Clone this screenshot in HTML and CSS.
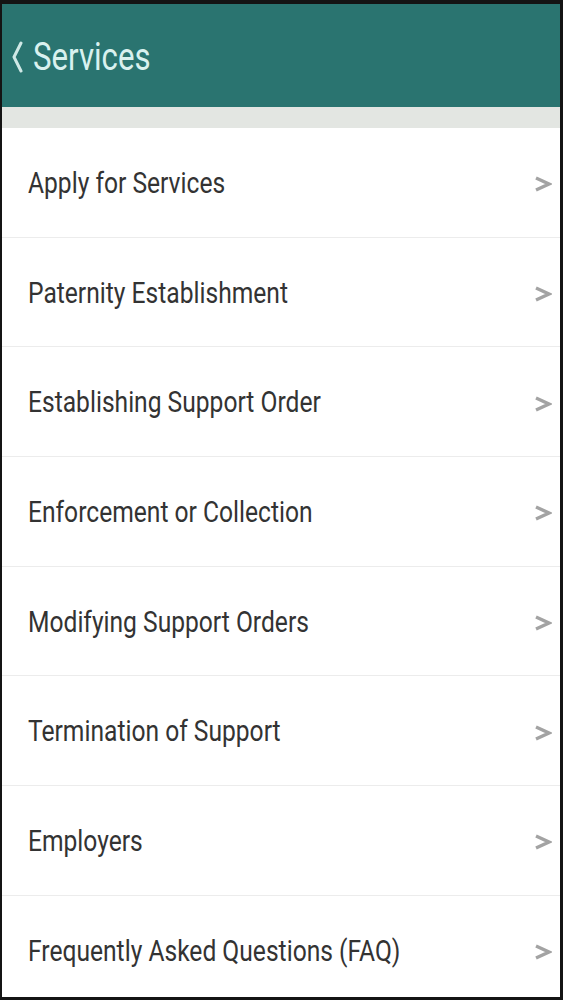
FILE: index.html
```html
<!DOCTYPE html>
<html>
<head>
<meta charset="utf-8">
<link rel="stylesheet" href="styles.css">
</head>
<body>
<div class="app">
  <header class="topbar">
    <svg class="back" width="14" height="32" viewBox="0 0 14 32"><polyline points="11,2 4,16 11,30" fill="none" stroke="#cfe8e6" stroke-width="3" stroke-linecap="round" stroke-linejoin="round"/></svg>
    <span class="title">Services</span>
  </header>
  <div class="band"></div>
  <ul class="list">
    <li class="row"><span class="label">Apply for Services</span><svg class="chev" width="18" height="18" viewBox="0 0 18 18"><polyline points="2,3 15,9 2,15" fill="none" stroke="#a3a3a3" stroke-width="3.4" stroke-linejoin="miter"/></svg></li>
    <li class="row"><span class="label">Paternity Establishment</span><svg class="chev" width="18" height="18" viewBox="0 0 18 18"><polyline points="2,3 15,9 2,15" fill="none" stroke="#a3a3a3" stroke-width="3.4" stroke-linejoin="miter"/></svg></li>
    <li class="row"><span class="label">Establishing Support Order</span><svg class="chev" width="18" height="18" viewBox="0 0 18 18"><polyline points="2,3 15,9 2,15" fill="none" stroke="#a3a3a3" stroke-width="3.4" stroke-linejoin="miter"/></svg></li>
    <li class="row"><span class="label">Enforcement or Collection</span><svg class="chev" width="18" height="18" viewBox="0 0 18 18"><polyline points="2,3 15,9 2,15" fill="none" stroke="#a3a3a3" stroke-width="3.4" stroke-linejoin="miter"/></svg></li>
    <li class="row"><span class="label">Modifying Support Orders</span><svg class="chev" width="18" height="18" viewBox="0 0 18 18"><polyline points="2,3 15,9 2,15" fill="none" stroke="#a3a3a3" stroke-width="3.4" stroke-linejoin="miter"/></svg></li>
    <li class="row"><span class="label">Termination of Support</span><svg class="chev" width="18" height="18" viewBox="0 0 18 18"><polyline points="2,3 15,9 2,15" fill="none" stroke="#a3a3a3" stroke-width="3.4" stroke-linejoin="miter"/></svg></li>
    <li class="row"><span class="label">Employers</span><svg class="chev" width="18" height="18" viewBox="0 0 18 18"><polyline points="2,3 15,9 2,15" fill="none" stroke="#a3a3a3" stroke-width="3.4" stroke-linejoin="miter"/></svg></li>
    <li class="row"><span class="label">Frequently Asked Questions (FAQ)</span><svg class="chev" width="18" height="18" viewBox="0 0 18 18"><polyline points="2,3 15,9 2,15" fill="none" stroke="#a3a3a3" stroke-width="3.4" stroke-linejoin="miter"/></svg></li>
  </ul>
</div>
</body>
</html>
```
FILE: styles.css
```css
html, body {
  margin: 0;
  padding: 0;
  background: #141414;
  height: 1000px;
  overflow: hidden;
}
.app {
  margin: 4px 3px 0 2px;
  height: 993px;
  background: #ffffff;
  font-family: Roboto, "Liberation Sans", sans-serif;
  overflow: hidden;
}
.topbar {
  height: 103px;
  background: #2a7470;
  display: flex;
  align-items: center;
  padding-left: 8px;
  gap: 9px;
  box-sizing: border-box;
}
.back {
  flex: none;
  margin-top: 2px;
}
.title {
  color: #d9f1ef;
  font-size: 39px;
  display: inline-block;
  transform: scaleX(0.8);
  transform-origin: left center;
  margin-top: 2px;
}
.band {
  height: 21px;
  background: #e3e6e2;
}
.list {
  list-style: none;
  margin: 0;
  padding: 0;
}
.row {
  height: 109.7px;
  box-sizing: border-box;
  border-bottom: 1.5px solid #ececec;
  display: flex;
  align-items: center;
  justify-content: space-between;
  padding: 0 8px 0 26px;
}
.label {
  color: #333333;
  font-size: 30px;
  white-space: nowrap;
  display: inline-block;
  transform: scaleX(0.82);
  transform-origin: left center;
}
.chev {
  flex: none;
  margin-top: 4px;
}
```
